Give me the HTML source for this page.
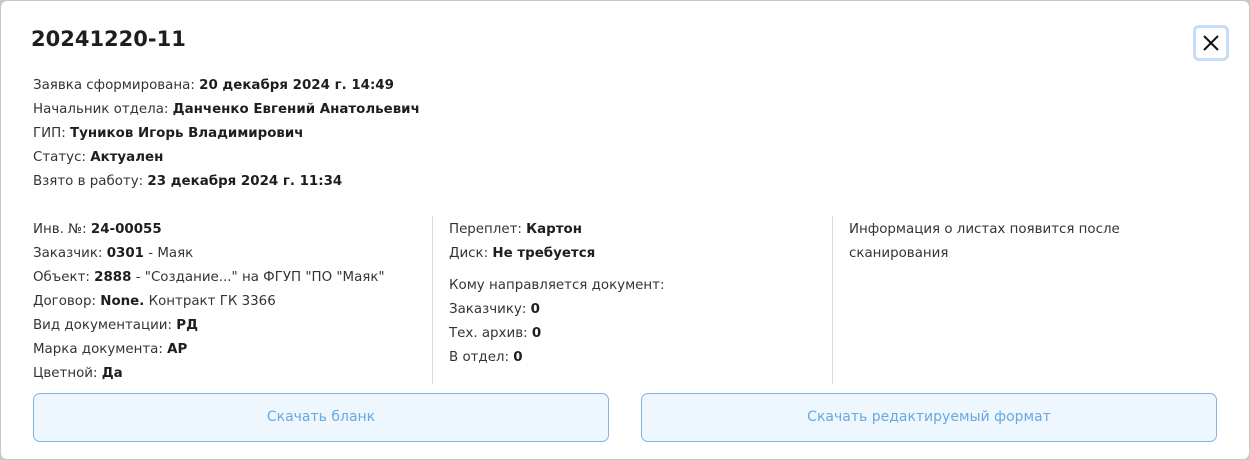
<!DOCTYPE html>
<html><head><meta charset="utf-8"><style>
html,body{margin:0;padding:0;width:1250px;height:460px;background:#c9c9c9;overflow:hidden}
.m{position:absolute;left:0;top:0;width:1248px;height:458px;background:#fff;border:1px solid #c7c7c7;border-radius:7px;font-family:"DejaVu Sans","Liberation Sans",sans-serif;color:#222;font-size:13.4px}
h1{position:absolute;left:30px;top:26px;margin:0;font-size:21px;font-weight:bold;color:#1e1e22;letter-spacing:0}
.l{position:absolute;white-space:nowrap;line-height:24px;color:#333}
.l b{color:#1e1e22}
.x{position:absolute;left:1192px;top:24px;width:30px;height:30px;border:3px solid #c5dcfb;border-radius:6px}
.vd{position:absolute;top:215px;width:1px;height:168px;background:#ddd}
.btn{position:absolute;top:392px;height:47px;width:574px;border:1px solid #7fb2e5;border-radius:7px;background:#eef6fe;color:#6aa8df;font-size:14px;text-align:center;line-height:47px}
</style></head><body><div class="m">
<h1>20241220-11</h1>
<div class="x"><svg width="30" height="30" viewBox="0 0 30 30"><path d="M8 8L22 22M22 8L8 22" stroke="#111" stroke-width="2"/></svg></div>
<div class="l" style="left:32px;top:73px">Заявка сформирована: <b>20 декабря 2024 г. 14:49</b><br>Начальник отдела: <b>Данченко Евгений Анатольевич</b><br>ГИП: <b>Туников Игорь Владимирович</b><br>Статус: <b>Актуален</b><br>Взято в работу: <b>23 декабря 2024 г. 11:34</b></div>
<div class="l" style="left:32px;top:217px">Инв. №: <b>24-00055</b><br>Заказчик: <b>0301</b> - Маяк<br>Объект: <b>2888</b> - "Создание..." на ФГУП "ПО "Маяк"<br>Договор: <b>None.</b> Контракт ГК 3366<br>Вид документации: <b>РД</b><br>Марка документа: <b>АР</b><br>Цветной: <b>Да</b></div>
<div class="vd" style="left:431px"></div>
<div class="vd" style="left:831px"></div>
<div class="l" style="left:448px;top:217px">Переплет: <b>Картон</b><br>Диск: <b>Не требуется</b></div>
<div class="l" style="left:448px;top:273px">Кому направляется документ:<br>Заказчику: <b>0</b><br>Тех. архив: <b>0</b><br>В отдел: <b>0</b></div>
<div class="l" style="left:848px;top:217px">Информация о листах появится после<br>сканирования</div>
<div class="btn" style="left:32px">Скачать бланк</div>
<div class="btn" style="left:640px">Скачать редактируемый формат</div>
</div></body></html>
